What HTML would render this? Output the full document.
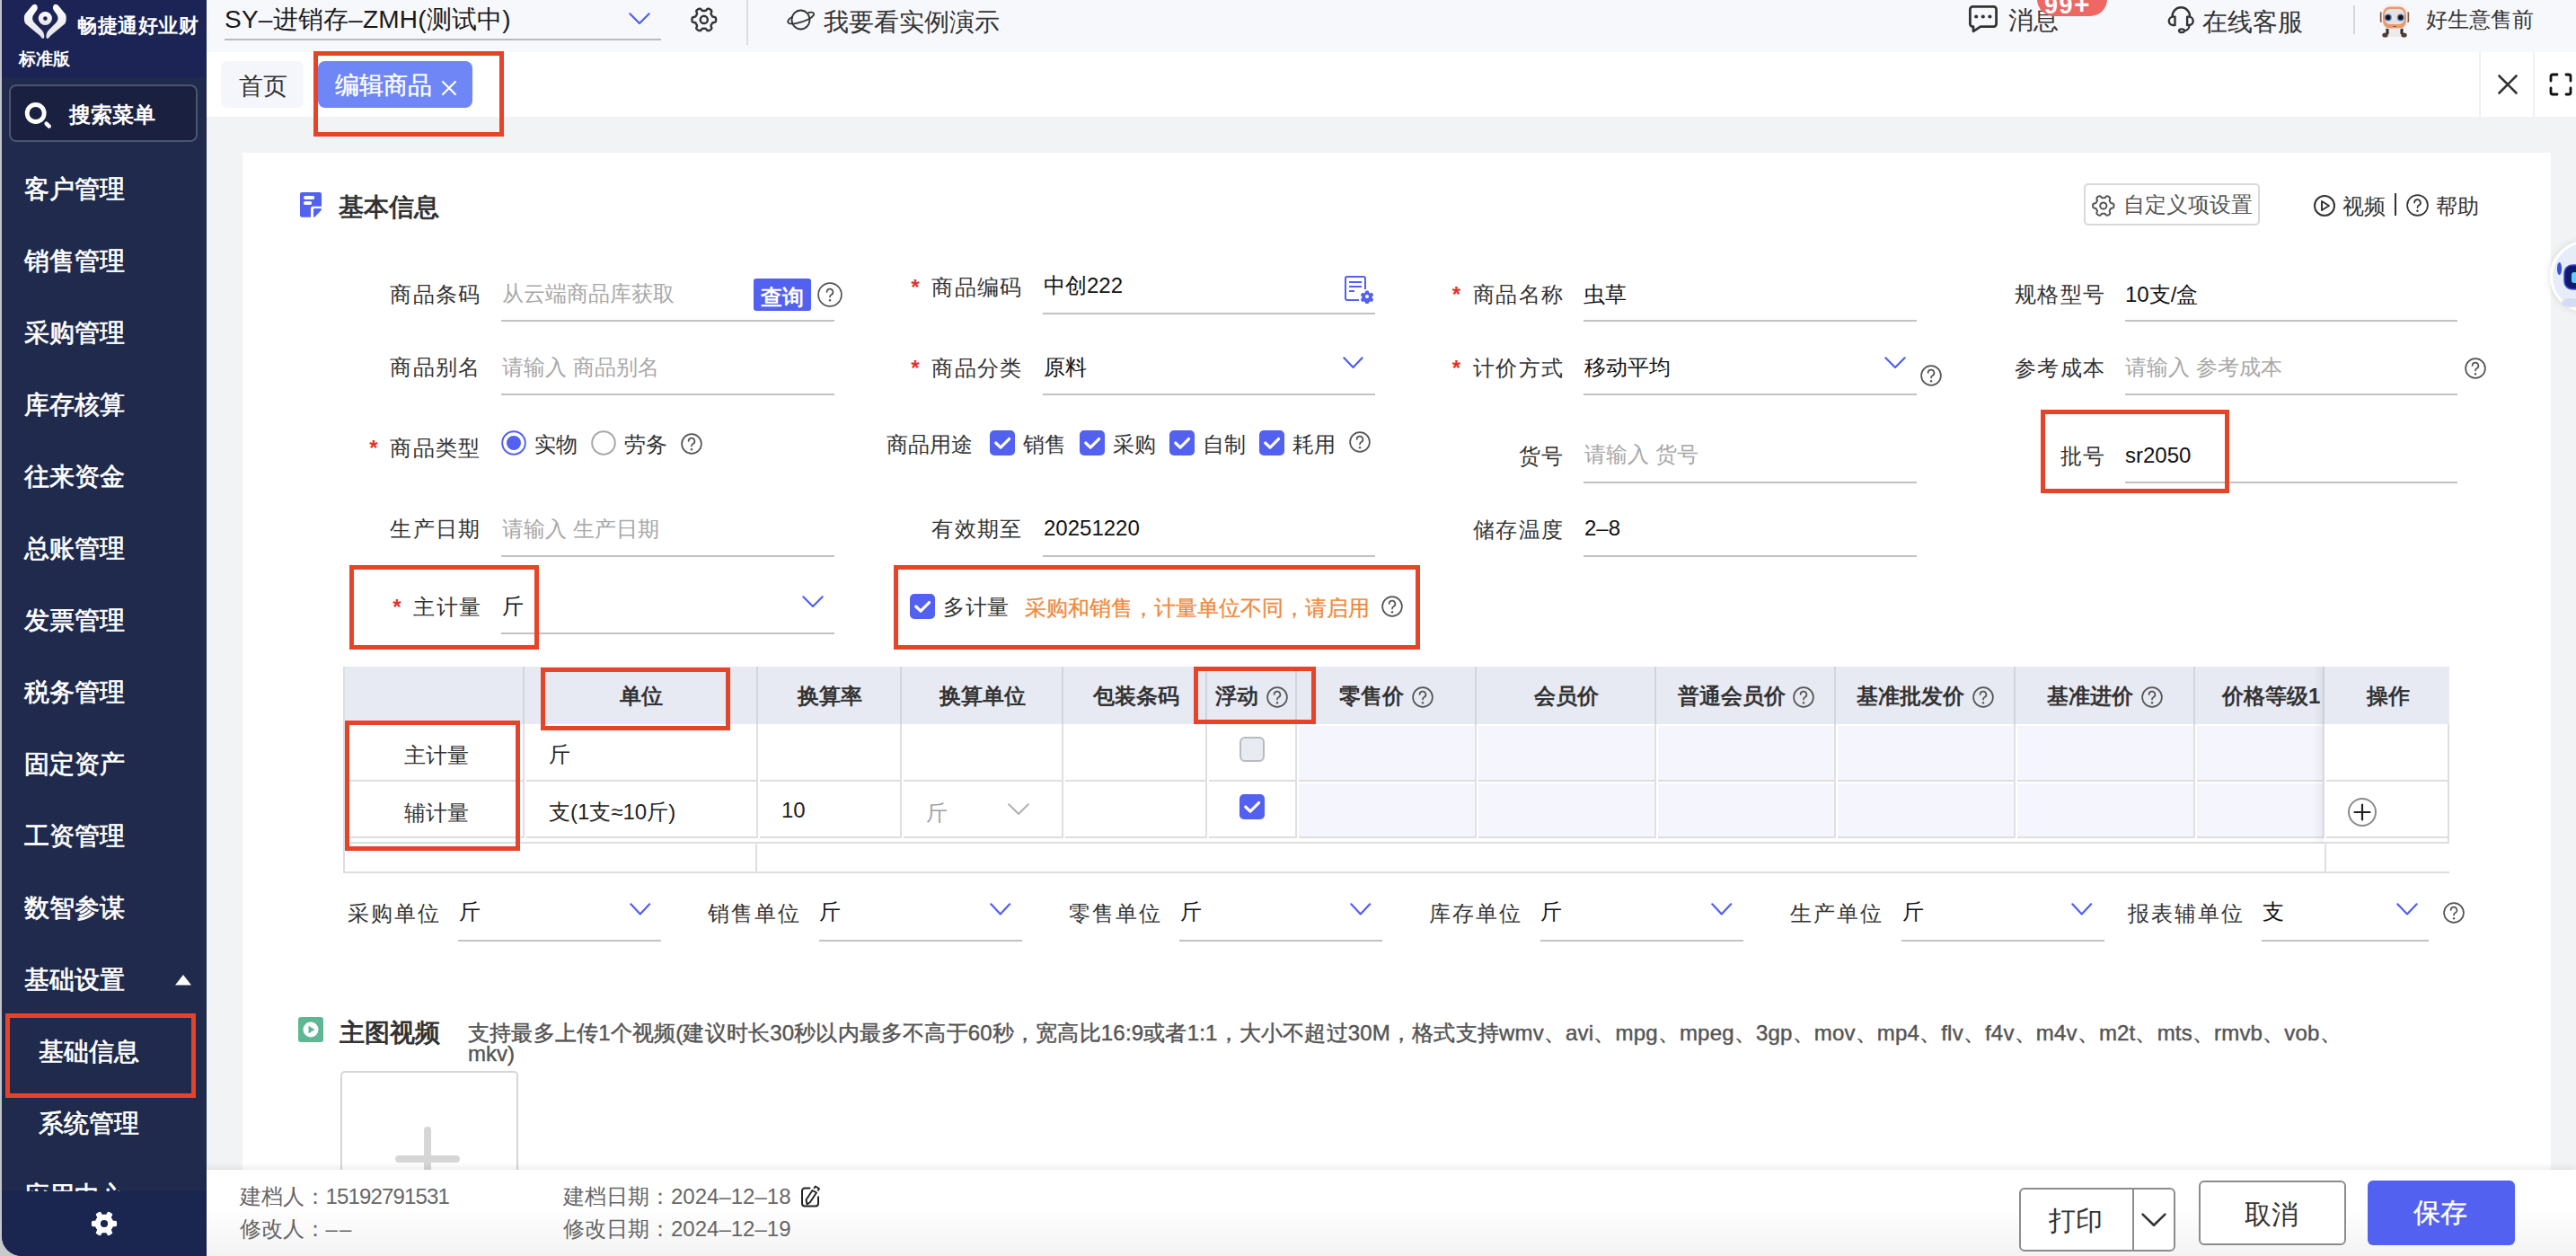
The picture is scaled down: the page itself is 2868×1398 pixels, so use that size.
<!DOCTYPE html><html><head><meta charset="utf-8"><style>
html,body{margin:0;padding:0;}
body{width:2868px;height:1398px;position:relative;overflow:hidden;background:#f2f3f5;font-family:"Liberation Sans",sans-serif;}
.t{position:absolute;white-space:nowrap;}
.b{position:absolute;}
</style></head><body>
<div class="b" style="left:230px;top:0px;width:2638px;height:58px;background:#f7f8fc;"></div>
<div class="b" style="left:230px;top:58px;width:2638px;height:72px;background:#ffffff;"></div>
<div class="b" style="left:270px;top:170px;width:2570px;height:1140px;background:#ffffff;"></div>
<div class="b" style="left:0px;top:0px;width:2px;height:1398px;background:#c3c4c8;"></div>
<div class="b" style="left:0px;top:1360px;width:40px;height:38px;background:#c8c9cd;"></div>
<div class="b" style="left:2px;top:0;width:228px;height:1398px;background:#1f2a4c;border-bottom-left-radius:22px;overflow:hidden;"><div class="b" style="left:0;top:0;width:228px;height:86px;background:#1b2454;"></div><div class="b" style="left:0;top:1326px;width:228px;height:72px;background:#1a2550;"></div></div>
<svg class="b" style="left:0px;top:0px;" width="100" height="50" viewBox="0 0 100 50">
<defs><linearGradient id="lg" x1="0" y1="0" x2="0" y2="1"><stop offset="0" stop-color="#ffffff"/><stop offset="1" stop-color="#e2e3e8"/></linearGradient></defs>
<path fill="url(#lg)" d="M38.7,4.8 C37.5,4.8 36.5,5.6 35.5,6.6 L28,15.5 C26.5,17.5 26.5,24 28.5,26.5 L44.5,39.8 C45.5,41 46.5,43 47.8,43 C49,43 49.5,41.5 49.2,39.5 C48.9,37 48,35 46,33 L38.5,25.5 C35.5,22.5 35.5,18.5 38,15.5 L40.8,11.5 C41.8,10 42,8.5 41.5,7 C41,5.6 39.9,4.8 38.7,4.8 Z"/>
<path fill="url(#lg)" d="M62,4.8 C63.2,4.8 64.2,5.6 65.2,6.6 L72.7,15.5 C74.2,17.5 74.2,24 72.2,26.5 L56.2,39.8 C55.2,41 54.2,43 52.9,43 C51.7,43 51.2,41.5 51.5,39.5 C51.8,37 52.7,35 54.7,33 L62.2,25.5 C65.2,22.5 65.2,18.5 62.7,15.5 L59.9,11.5 C58.9,10 58.7,8.5 59.2,7 C59.7,5.6 60.8,4.8 62,4.8 Z"/>
<ellipse cx="50.35" cy="20.5" rx="7.6" ry="7.4" fill="url(#lg)"/>
<circle cx="50.4" cy="20.6" r="2.3" fill="#1b2454"/>
</svg>
<div class="t " style="left:86px;top:18px;font-size:22px;line-height:22px;color:#fff;font-weight:bold;letter-spacing:0.6px;">畅捷通好业财</div>
<div class="t " style="left:21px;top:56px;font-size:19px;line-height:19px;color:#fff;font-weight:bold;">标准版</div>
<div class="b" style="left:10px;top:94px;width:210px;height:64px;box-sizing:border-box;border:2px solid #4b5470;border-radius:8px;background:#1a2140;"></div>
<svg class="b" style="left:27px;top:113px;" width="32" height="32" viewBox="0 0 32 32"><circle cx="12.7" cy="13" r="9.5" fill="none" stroke="#fff" stroke-width="4.8"/><line x1="24.6" y1="24.6" x2="27.8" y2="27.6" stroke="#fff" stroke-width="4.4" stroke-linecap="round"/></svg>
<div class="t " style="left:77px;top:116px;font-size:24px;line-height:24px;color:#fff;font-weight:bold;">搜索菜单</div>
<div class="t " style="left:27px;top:197px;font-size:28px;line-height:28px;color:#fff;-webkit-text-stroke:0.7px #fff;">客户管理</div>
<div class="t " style="left:27px;top:277px;font-size:28px;line-height:28px;color:#fff;-webkit-text-stroke:0.7px #fff;">销售管理</div>
<div class="t " style="left:27px;top:357px;font-size:28px;line-height:28px;color:#fff;-webkit-text-stroke:0.7px #fff;">采购管理</div>
<div class="t " style="left:27px;top:437px;font-size:28px;line-height:28px;color:#fff;-webkit-text-stroke:0.7px #fff;">库存核算</div>
<div class="t " style="left:27px;top:517px;font-size:28px;line-height:28px;color:#fff;-webkit-text-stroke:0.7px #fff;">往来资金</div>
<div class="t " style="left:27px;top:597px;font-size:28px;line-height:28px;color:#fff;-webkit-text-stroke:0.7px #fff;">总账管理</div>
<div class="t " style="left:27px;top:677px;font-size:28px;line-height:28px;color:#fff;-webkit-text-stroke:0.7px #fff;">发票管理</div>
<div class="t " style="left:27px;top:757px;font-size:28px;line-height:28px;color:#fff;-webkit-text-stroke:0.7px #fff;">税务管理</div>
<div class="t " style="left:27px;top:837px;font-size:28px;line-height:28px;color:#fff;-webkit-text-stroke:0.7px #fff;">固定资产</div>
<div class="t " style="left:27px;top:917px;font-size:28px;line-height:28px;color:#fff;-webkit-text-stroke:0.7px #fff;">工资管理</div>
<div class="t " style="left:27px;top:997px;font-size:28px;line-height:28px;color:#fff;-webkit-text-stroke:0.7px #fff;">数智参谋</div>
<div class="t " style="left:27px;top:1077px;font-size:28px;line-height:28px;color:#fff;-webkit-text-stroke:0.7px #fff;">基础设置</div>
<svg class="b" style="left:195px;top:1085px;" width="18" height="12" viewBox="0 0 18 12"><polygon points="9,0 18,11.5 0,11.5" fill="#fff"/></svg>
<div class="t " style="left:43px;top:1157px;font-size:28px;line-height:28px;color:#fff;-webkit-text-stroke:0.7px #fff;">基础信息</div>
<div class="t " style="left:43px;top:1237px;font-size:28px;line-height:28px;color:#fff;-webkit-text-stroke:0.7px #fff;">系统管理</div>
<div class="b" style="left:2px;top:1300px;width:228px;height:26px;overflow:hidden;"><div class="t" style="left:25px;top:17px;font-size:28px;line-height:28px;color:#fff;-webkit-text-stroke:0.7px #fff;">应用中心</div></div>
<div class="b" style="left:6px;top:1128px;width:212px;height:94px;box-sizing:border-box;border:5px solid #e64328;border-radius:0px;background:transparent;"></div>
<svg class="b" style="left:98px;top:1344px;" width="36" height="36" viewBox="0 0 36 36"><path fill="#fff" d="M32.10,18.00 L32.09,18.49 L32.06,18.98 L32.02,19.47 L31.95,19.96 L31.82,20.44 L31.50,20.87 L30.57,21.13 L29.00,21.16 L28.08,21.27 L27.74,21.55 L27.57,21.86 L27.41,22.19 L27.26,22.52 L27.09,22.84 L26.92,23.15 L26.74,23.46 L26.54,23.76 L26.34,24.06 L26.13,24.35 L25.94,24.66 L25.87,25.09 L26.24,25.95 L27.00,27.32 L27.24,28.26 L27.02,28.75 L26.67,29.10 L26.29,29.40 L25.88,29.69 L25.47,29.96 L25.05,30.21 L24.62,30.45 L24.18,30.67 L23.73,30.88 L23.28,31.06 L22.80,31.19 L22.27,31.13 L21.57,30.45 L20.77,29.11 L20.20,28.36 L19.80,28.21 L19.44,28.22 L19.08,28.25 L18.72,28.28 L18.36,28.29 L18.00,28.30 L17.64,28.29 L17.28,28.28 L16.92,28.25 L16.56,28.22 L16.20,28.21 L15.80,28.36 L15.23,29.11 L14.43,30.45 L13.73,31.13 L13.20,31.19 L12.72,31.06 L12.27,30.88 L11.82,30.67 L11.38,30.45 L10.95,30.21 L10.53,29.96 L10.12,29.69 L9.71,29.40 L9.33,29.10 L8.98,28.75 L8.76,28.26 L9.00,27.32 L9.76,25.95 L10.13,25.09 L10.06,24.66 L9.87,24.35 L9.66,24.06 L9.46,23.76 L9.26,23.46 L9.08,23.15 L8.91,22.84 L8.74,22.52 L8.59,22.19 L8.43,21.86 L8.26,21.55 L7.92,21.27 L7.00,21.16 L5.43,21.13 L4.50,20.87 L4.18,20.44 L4.05,19.96 L3.98,19.47 L3.94,18.98 L3.91,18.49 L3.90,18.00 L3.91,17.51 L3.94,17.02 L3.98,16.53 L4.05,16.04 L4.18,15.56 L4.50,15.13 L5.43,14.87 L7.00,14.84 L7.92,14.73 L8.26,14.45 L8.43,14.14 L8.59,13.81 L8.74,13.48 L8.91,13.16 L9.08,12.85 L9.26,12.54 L9.46,12.24 L9.66,11.94 L9.87,11.65 L10.06,11.34 L10.13,10.91 L9.76,10.05 L9.00,8.68 L8.76,7.74 L8.98,7.25 L9.33,6.90 L9.71,6.60 L10.12,6.31 L10.53,6.04 L10.95,5.79 L11.38,5.55 L11.82,5.33 L12.27,5.12 L12.72,4.94 L13.20,4.81 L13.73,4.87 L14.43,5.55 L15.23,6.89 L15.80,7.64 L16.20,7.79 L16.56,7.78 L16.92,7.75 L17.28,7.72 L17.64,7.71 L18.00,7.70 L18.36,7.71 L18.72,7.72 L19.08,7.75 L19.44,7.78 L19.80,7.79 L20.20,7.64 L20.77,6.89 L21.57,5.55 L22.27,4.87 L22.80,4.81 L23.28,4.94 L23.73,5.12 L24.18,5.33 L24.62,5.55 L25.05,5.79 L25.47,6.04 L25.88,6.31 L26.29,6.60 L26.67,6.90 L27.02,7.25 L27.24,7.74 L27.00,8.68 L26.24,10.05 L25.87,10.91 L25.94,11.34 L26.13,11.65 L26.34,11.94 L26.54,12.24 L26.74,12.54 L26.92,12.85 L27.09,13.16 L27.26,13.48 L27.41,13.81 L27.57,14.14 L27.74,14.45 L28.08,14.73 L29.00,14.84 L30.57,14.87 L31.50,15.13 L31.82,15.56 L31.95,16.04 L32.02,16.53 L32.06,17.02 L32.09,17.51Z"/><circle cx="18" cy="18" r="4.1" fill="#1a2550"/></svg>
<div class="t " style="left:250px;top:8px;font-size:28px;line-height:28px;color:#1a1a1a;letter-spacing:0.2px;">SY–进销存–ZMH(测试中)</div>
<div class="b" style="left:250px;top:43px;width:486px;height:2px;background:#b9bbbf;"></div>
<svg class="b" style="left:698px;top:12px;" width="28" height="17" viewBox="0 0 28 17"><polyline points="3.3200000000000003,3.3200000000000003 14.0,13.943999999999999 24.68,3.3200000000000003" fill="none" stroke="#4e5ef5" stroke-width="2.2" stroke-linecap="round" stroke-linejoin="round"/></svg>
<svg class="b" style="left:766px;top:5px;" width="36" height="34" viewBox="0 0 36 34"><path fill="none" stroke="#333" stroke-width="2.4" stroke-linejoin="round" d="M31.10,16.90 L31.09,17.36 L31.06,17.83 L30.99,18.29 L30.88,18.74 L30.66,19.17 L30.24,19.54 L29.48,19.81 L28.53,19.98 L27.77,20.14 L27.33,20.37 L27.07,20.64 L26.88,20.94 L26.71,21.25 L26.54,21.55 L26.37,21.85 L26.20,22.15 L26.02,22.44 L25.84,22.74 L25.68,23.05 L25.57,23.42 L25.59,23.91 L25.83,24.65 L26.16,25.56 L26.31,26.35 L26.20,26.91 L25.93,27.31 L25.60,27.63 L25.23,27.92 L24.85,28.18 L24.45,28.42 L24.04,28.64 L23.62,28.84 L23.19,29.02 L22.75,29.14 L22.27,29.17 L21.73,28.99 L21.12,28.47 L20.50,27.73 L19.98,27.15 L19.56,26.88 L19.19,26.80 L18.84,26.78 L18.49,26.79 L18.15,26.80 L17.80,26.80 L17.45,26.80 L17.11,26.79 L16.76,26.78 L16.41,26.80 L16.04,26.88 L15.62,27.15 L15.10,27.73 L14.48,28.47 L13.87,28.99 L13.33,29.17 L12.85,29.14 L12.41,29.02 L11.98,28.84 L11.56,28.64 L11.15,28.42 L10.75,28.18 L10.37,27.92 L10.00,27.63 L9.67,27.31 L9.40,26.91 L9.29,26.35 L9.44,25.56 L9.77,24.65 L10.01,23.91 L10.03,23.42 L9.92,23.05 L9.76,22.74 L9.58,22.44 L9.40,22.15 L9.23,21.85 L9.06,21.55 L8.89,21.25 L8.72,20.94 L8.53,20.64 L8.27,20.37 L7.83,20.14 L7.07,19.98 L6.12,19.81 L5.36,19.54 L4.94,19.17 L4.72,18.74 L4.61,18.29 L4.54,17.83 L4.51,17.36 L4.50,16.90 L4.51,16.44 L4.54,15.97 L4.61,15.51 L4.72,15.06 L4.94,14.63 L5.36,14.26 L6.12,13.99 L7.07,13.82 L7.83,13.66 L8.27,13.43 L8.53,13.16 L8.72,12.86 L8.89,12.55 L9.06,12.25 L9.23,11.95 L9.40,11.65 L9.58,11.36 L9.76,11.06 L9.92,10.75 L10.03,10.38 L10.01,9.89 L9.77,9.15 L9.44,8.24 L9.29,7.45 L9.40,6.89 L9.67,6.49 L10.00,6.17 L10.37,5.88 L10.75,5.62 L11.15,5.38 L11.56,5.16 L11.98,4.96 L12.41,4.78 L12.85,4.66 L13.33,4.63 L13.87,4.81 L14.48,5.33 L15.10,6.07 L15.62,6.65 L16.04,6.92 L16.41,7.00 L16.76,7.02 L17.11,7.01 L17.45,7.00 L17.80,7.00 L18.15,7.00 L18.49,7.01 L18.84,7.02 L19.19,7.00 L19.56,6.92 L19.98,6.65 L20.50,6.07 L21.12,5.33 L21.73,4.81 L22.27,4.63 L22.75,4.66 L23.19,4.78 L23.62,4.96 L24.04,5.16 L24.45,5.38 L24.85,5.62 L25.23,5.88 L25.60,6.17 L25.93,6.49 L26.20,6.89 L26.31,7.45 L26.16,8.24 L25.83,9.15 L25.59,9.89 L25.57,10.38 L25.68,10.75 L25.84,11.06 L26.02,11.36 L26.20,11.65 L26.37,11.95 L26.54,12.25 L26.71,12.55 L26.88,12.86 L27.07,13.16 L27.33,13.43 L27.77,13.66 L28.53,13.82 L29.48,13.99 L30.24,14.26 L30.66,14.63 L30.88,15.06 L30.99,15.51 L31.06,15.97 L31.09,16.44Z"/><circle cx="17.8" cy="16.9" r="4.1" fill="none" stroke="#333" stroke-width="2.4"/></svg>
<div class="b" style="left:831px;top:0px;width:2px;height:50px;background:#dcdde2;"></div>
<svg class="b" style="left:876px;top:10px;" width="32" height="24" viewBox="0 0 32 24"><ellipse cx="15.5" cy="12" rx="10" ry="10.5" fill="none" stroke="#333" stroke-width="1.8"/><path d="M6.5,8.5 C1,11 0,15 2.5,16 C6,17.5 17,15 24,11.5 C30,8.5 31.5,5 29,4 C27.5,3.4 25.5,3.6 23.5,4.2" fill="none" stroke="#333" stroke-width="1.8"/></svg>
<div class="t " style="left:917px;top:11px;font-size:28px;line-height:28px;color:#333;">我要看实例演示</div>
<svg class="b" style="left:2190px;top:4px;" width="36" height="36" viewBox="0 0 36 36"><path d="M6.4,3.4 h23.2 a3,3 0 0 1 3,3 v16.2 a3,3 0 0 1 -3,3 h-14.6 l-8,5.2 v-5.2 h-0.6 a3,3 0 0 1 -3,-3 v-16.2 a3,3 0 0 1 3,-3z" fill="none" stroke="#333" stroke-width="2.8" stroke-linejoin="round"/><circle cx="10.2" cy="14.5" r="2.1" fill="#333"/><circle cx="17.8" cy="14.5" r="2.1" fill="#333"/><circle cx="25.4" cy="14.5" r="2.1" fill="#333"/></svg>
<div class="t " style="left:2236px;top:9px;font-size:28px;line-height:28px;color:#333;">消息</div>
<div class="b" style="left:2268px;top:-20px;width:78px;height:38px;background:#ee6763;border-radius:0 0 19px 19px;"></div>
<div class="t" style="left:2276px;top:-9px;font-size:27px;line-height:27px;color:#fff;font-weight:bold;letter-spacing:1.5px;">99<span style="font-size:30px;">+</span></div>
<svg class="b" style="left:2405px;top:0px;" width="45" height="45" viewBox="0 0 45 45"><path d="M13.6,18.6 V18 A9.7,9.7 0 0 1 33,18 V18.6" fill="none" stroke="#333" stroke-width="2.4"/><path d="M16.5,18.6 V28 H14.5 A4.7,4.7 0 0 1 14.5,18.6 Z" fill="none" stroke="#333" stroke-width="2.4" stroke-linejoin="round"/><path d="M30.1,18.6 V28 H32 A4.7,4.7 0 0 0 32,18.6 Z" fill="none" stroke="#333" stroke-width="2.4" stroke-linejoin="round"/><path d="M32.5,28.5 C32.5,31.5 30,34 26.8,34.2" fill="none" stroke="#333" stroke-width="2.2"/><ellipse cx="24" cy="34.2" rx="3" ry="1.9" fill="none" stroke="#333" stroke-width="2.2"/></svg>
<div class="t " style="left:2452px;top:11px;font-size:28px;line-height:28px;color:#333;">在线客服</div>
<div class="b" style="left:2620px;top:6px;width:2px;height:32px;background:#d6d7dc;"></div>
<svg class="b" style="left:2645px;top:2px;" width="42" height="42" viewBox="0 0 42 42">
<rect x="4.8" y="11" width="3.4" height="12" rx="1.5" fill="#8a5a48"/><rect x="33.8" y="11" width="3.4" height="12" rx="1.5" fill="#8a5a48"/>
<rect x="13" y="29" width="16" height="10" rx="2" fill="#ecebea"/>
<rect x="11.5" y="29" width="3" height="7" fill="#2a2a32"/><rect x="27.5" y="29" width="3" height="7" fill="#2a2a32"/>
<ellipse cx="10.5" cy="37" rx="3.2" ry="2.6" fill="#5a3a30"/><ellipse cx="31.5" cy="37" rx="3.2" ry="2.6" fill="#5a3a30"/>
<rect x="6.5" y="2.5" width="29" height="28" rx="9" fill="#f5f2f0"/>
<rect x="8" y="5.5" width="26" height="24" rx="8" fill="#e9996e"/>
<rect x="10" y="8" width="22" height="17" rx="6" fill="#e6e0de"/>
<circle cx="13.8" cy="17.4" r="4" fill="#4a86cf"/><circle cx="13.8" cy="17.4" r="2.6" fill="#1a1010"/>
<circle cx="27.8" cy="17.4" r="4" fill="#4a86cf"/><circle cx="27.8" cy="17.4" r="2.6" fill="#1a1010"/>
<path d="M18.5,27 Q21,29 23.5,27 Z" fill="#7a4a3a"/>
</svg>
<div class="t " style="left:2701px;top:10px;font-size:24px;line-height:24px;color:#333;">好生意售前</div>
<div class="b" style="left:246px;top:68px;width:92px;height:52px;background:#f4f6fc;border-radius:7px;"></div>
<div class="t " style="left:266px;top:83px;font-size:27px;line-height:27px;color:#333;">首页</div>
<div class="b" style="left:354px;top:68px;width:172px;height:52px;background:#6e86f6;border-radius:8px;"></div>
<div class="t " style="left:373px;top:82px;font-size:27px;line-height:27px;color:#fff;-webkit-text-stroke:0.4px #fff;">编辑商品</div>
<svg class="b" style="left:490px;top:88px;" width="20" height="20" viewBox="0 0 20 20"><path d="M3,3 L17,17 M17,3 L3,17" stroke="#fff" stroke-width="2.2" stroke-linecap="round"/></svg>
<div class="b" style="left:349px;top:57px;width:212px;height:95px;box-sizing:border-box;border:5px solid #e64328;border-radius:0px;background:transparent;"></div>
<div class="b" style="left:2760px;top:58px;width:2px;height:72px;background:#eef0f7;"></div>
<div class="b" style="left:2820px;top:58px;width:2px;height:72px;background:#eef0f7;"></div>
<svg class="b" style="left:2780px;top:82px;" width="24" height="24" viewBox="0 0 24 24"><path d="M2.5,2.5 L21.5,21.5 M21.5,2.5 L2.5,21.5" stroke="#333" stroke-width="2.6" stroke-linecap="round"/></svg>
<svg class="b" style="left:2838px;top:81px;" width="30" height="26" viewBox="0 0 30 26"><path d="M2,9 V4 a2,2 0 0 1 2,-2 H9 M19,2 H22 a2,2 0 0 1 2,2 V9 M24,17 V22 a2,2 0 0 1 -2,2 H19 M9,24 H4 a2,2 0 0 1 -2,-2 V17" fill="none" stroke="#111" stroke-width="2.8" stroke-linecap="round"/></svg>
<svg class="b" style="left:334px;top:214px;" width="24" height="28" viewBox="0 0 24 28"><path fill="#5361f0" d="M2,0 H22 a2,2 0 0 1 2,2 V15.8 H14.5 a2.5,2.5 0 0 0 -2.5,2.5 V27.7 H2 a2,2 0 0 1 -2,-2 V2 a2,2 0 0 1 2,-2 Z"/><path fill="#5361f0" d="M16.2,18.1 H22.8 a1.2,1.2 0 0 1 0.9,2 L16.5,27.6 a1,1 0 0 1 -1.5,-0.6 V19.3 a1.2,1.2 0 0 1 1.2,-1.2 Z"/><rect x="4" y="3.9" width="12.2" height="4.2" rx="2.1" fill="#fff"/><rect x="4" y="10" width="9.2" height="4" rx="2" fill="#fff"/></svg>
<div class="t " style="left:377px;top:217px;font-size:28px;line-height:28px;color:#333;font-weight:bold;">基本信息</div>
<div class="b" style="left:2320px;top:204px;width:196px;height:47px;box-sizing:border-box;border:2px solid #d9d9dc;border-radius:5px;background:transparent;"></div>
<svg class="b" style="left:2326px;top:214px;" width="32" height="30" viewBox="0 0 32 30"><path fill="none" stroke="#555" stroke-width="2" stroke-linejoin="round" d="M27.50,15.00 L27.49,15.41 L27.46,15.82 L27.40,16.22 L27.30,16.62 L27.12,17.00 L26.74,17.33 L26.07,17.56 L25.23,17.70 L24.56,17.85 L24.17,18.05 L23.94,18.29 L23.78,18.55 L23.63,18.82 L23.48,19.09 L23.33,19.35 L23.18,19.61 L23.02,19.87 L22.86,20.13 L22.72,20.41 L22.63,20.73 L22.65,21.17 L22.86,21.82 L23.16,22.62 L23.28,23.31 L23.19,23.80 L22.95,24.15 L22.66,24.44 L22.34,24.69 L22.00,24.92 L21.65,25.13 L21.29,25.33 L20.92,25.51 L20.55,25.66 L20.15,25.77 L19.73,25.80 L19.26,25.64 L18.72,25.18 L18.17,24.52 L17.72,24.01 L17.35,23.77 L17.02,23.70 L16.71,23.68 L16.41,23.69 L16.10,23.70 L15.80,23.70 L15.50,23.70 L15.19,23.69 L14.89,23.68 L14.58,23.70 L14.25,23.77 L13.88,24.01 L13.43,24.52 L12.88,25.18 L12.34,25.64 L11.87,25.80 L11.45,25.77 L11.05,25.66 L10.68,25.51 L10.31,25.33 L9.95,25.13 L9.60,24.92 L9.26,24.69 L8.94,24.44 L8.65,24.15 L8.41,23.80 L8.32,23.31 L8.44,22.62 L8.74,21.82 L8.95,21.17 L8.97,20.73 L8.88,20.41 L8.74,20.13 L8.58,19.87 L8.42,19.61 L8.27,19.35 L8.12,19.09 L7.97,18.82 L7.82,18.55 L7.66,18.29 L7.43,18.05 L7.04,17.85 L6.37,17.70 L5.53,17.56 L4.86,17.33 L4.48,17.00 L4.30,16.62 L4.20,16.22 L4.14,15.82 L4.11,15.41 L4.10,15.00 L4.11,14.59 L4.14,14.18 L4.20,13.78 L4.30,13.38 L4.48,13.00 L4.86,12.67 L5.53,12.44 L6.37,12.30 L7.04,12.15 L7.43,11.95 L7.66,11.71 L7.82,11.45 L7.97,11.18 L8.12,10.91 L8.27,10.65 L8.42,10.39 L8.58,10.13 L8.74,9.87 L8.88,9.59 L8.97,9.27 L8.95,8.83 L8.74,8.18 L8.44,7.38 L8.32,6.69 L8.41,6.20 L8.65,5.85 L8.94,5.56 L9.26,5.31 L9.60,5.08 L9.95,4.87 L10.31,4.67 L10.68,4.49 L11.05,4.34 L11.45,4.23 L11.87,4.20 L12.34,4.36 L12.88,4.82 L13.43,5.48 L13.88,5.99 L14.25,6.23 L14.58,6.30 L14.89,6.32 L15.19,6.31 L15.50,6.30 L15.80,6.30 L16.10,6.30 L16.41,6.31 L16.71,6.32 L17.02,6.30 L17.35,6.23 L17.72,5.99 L18.17,5.48 L18.72,4.82 L19.26,4.36 L19.73,4.20 L20.15,4.23 L20.55,4.34 L20.92,4.49 L21.29,4.67 L21.65,4.87 L22.00,5.08 L22.34,5.31 L22.66,5.56 L22.95,5.85 L23.19,6.20 L23.28,6.69 L23.16,7.38 L22.86,8.18 L22.65,8.83 L22.63,9.27 L22.72,9.59 L22.86,9.87 L23.02,10.13 L23.18,10.39 L23.33,10.65 L23.48,10.91 L23.63,11.18 L23.78,11.45 L23.94,11.71 L24.17,11.95 L24.56,12.15 L25.23,12.30 L26.07,12.44 L26.74,12.67 L27.12,13.00 L27.30,13.38 L27.40,13.78 L27.46,14.18 L27.49,14.59Z"/><circle cx="15.8" cy="15" r="3.6" fill="none" stroke="#555" stroke-width="2"/></svg>
<div class="t " style="left:2363.5px;top:216px;font-size:24px;line-height:24px;color:#555;">自定义项设置</div>
<svg class="b" style="left:2575px;top:216px;" width="26" height="26" viewBox="0 0 26 26"><circle cx="13" cy="13" r="11" fill="none" stroke="#333" stroke-width="2"/><path d="M10,8 L18,13 L10,18 Z" fill="none" stroke="#333" stroke-width="2" stroke-linejoin="round"/></svg>
<div class="t " style="left:2608px;top:218px;font-size:24px;line-height:24px;color:#333;">视频</div>
<div class="b" style="left:2666px;top:215px;width:2px;height:25px;background:#333;"></div>
<svg class="b" style="left:2679px;top:216px;" width="25" height="25" viewBox="0 0 25 25"><circle cx="12.5" cy="12.5" r="11.4" fill="none" stroke="#333" stroke-width="1.7"/><path d="M9.1,9.5 a3.4,3.4 0 1 1 5.0,3.0 c-1.1,0.6 -1.6,1.2 -1.6,2.5" fill="none" stroke="#333" stroke-width="1.7" stroke-linecap="round"/><circle cx="12.5" cy="18.7" r="1.2" fill="#333"/></svg>
<div class="t " style="left:2712px;top:218px;font-size:24px;line-height:24px;color:#333;">帮助</div>
<div class="t " style="left:434.3px;top:316px;font-size:24px;line-height:24px;color:#333;letter-spacing:1.4px;">商品条码</div>
<div class="t " style="left:559px;top:315px;font-size:24px;line-height:24px;color:#a8a8a8;">从云端商品库获取</div>
<div class="b" style="left:839px;top:310px;width:64px;height:36px;background:#5361f0;border-radius:3px;"></div>
<div class="t " style="left:847px;top:319px;font-size:24px;line-height:24px;color:#fff;font-weight:bold;">查询</div>
<svg class="b" style="left:910px;top:314px;" width="28" height="28" viewBox="0 0 28 28"><circle cx="14.0" cy="14.0" r="12.9" fill="none" stroke="#555" stroke-width="1.7"/><path d="M10.6,11.0 a3.4,3.4 0 1 1 5.0,3.0 c-1.1,0.6 -1.6,1.2 -1.6,2.5" fill="none" stroke="#555" stroke-width="1.7" stroke-linecap="round"/><circle cx="14.0" cy="20.2" r="1.2" fill="#555"/></svg>
<div class="b" style="left:558px;top:356px;width:371px;height:2px;background:#c2c2c2;"></div>
<div class="t " style="left:1037.3px;top:308px;font-size:24px;line-height:24px;color:#333;letter-spacing:1.4px;">商品编码</div>
<div class="t " style="left:1014.3px;top:307.5px;font-size:24px;line-height:24px;color:#e5302a;font-weight:bold;">*</div>
<div class="t " style="left:1162px;top:306px;font-size:24px;line-height:24px;color:#111;">中创222</div>
<svg class="b" style="left:1496px;top:306px;" width="36" height="32" viewBox="0 0 36 32"><path d="M17,28 H4 a2,2 0 0 1 -2,-2 V4 a2,2 0 0 1 2,-2 H22 a2,2 0 0 1 2,2 V16" fill="none" stroke="#5361f0" stroke-width="2"/><line x1="6" y1="8" x2="20" y2="8" stroke="#5361f0" stroke-width="2"/><line x1="6" y1="13" x2="20" y2="13" stroke="#5361f0" stroke-width="2"/><line x1="6" y1="18" x2="12" y2="18" stroke="#5361f0" stroke-width="2"/><g transform="translate(26,24)"><path fill="#5361f0" d="M-1.6,-6.5h3.2l0.5,2a4.5,4.5 0 0 1 1.5,0.9l2-0.6l1.6,2.8l-1.5,1.4a4.5,4.5 0 0 1 0,1.8l1.5,1.4l-1.6,2.8l-2-0.6a4.5,4.5 0 0 1 -1.5,0.9l-0.5,2h-3.2l-0.5-2a4.5,4.5 0 0 1 -1.5-0.9l-2,0.6l-1.6-2.8l1.5-1.4a4.5,4.5 0 0 1 0-1.8l-1.5-1.4l1.6-2.8l2,0.6a4.5,4.5 0 0 1 1.5-0.9z"/><circle r="2" fill="#fff"/></g></svg>
<div class="b" style="left:1161px;top:348px;width:370px;height:2px;background:#c2c2c2;"></div>
<div class="t " style="left:1639.8px;top:316px;font-size:24px;line-height:24px;color:#333;letter-spacing:1.4px;">商品名称</div>
<div class="t " style="left:1616.8px;top:315.5px;font-size:24px;line-height:24px;color:#e5302a;font-weight:bold;">*</div>
<div class="t " style="left:1763px;top:316px;font-size:24px;line-height:24px;color:#111;">虫草</div>
<div class="b" style="left:1763px;top:356px;width:371px;height:2px;background:#c2c2c2;"></div>
<div class="t " style="left:2242.8px;top:316px;font-size:24px;line-height:24px;color:#333;letter-spacing:1.4px;">规格型号</div>
<div class="t " style="left:2366px;top:316px;font-size:24px;line-height:24px;color:#111;">10支/盒</div>
<div class="b" style="left:2366px;top:356px;width:370px;height:2px;background:#c2c2c2;"></div>
<div class="t " style="left:434.3px;top:397px;font-size:24px;line-height:24px;color:#333;letter-spacing:1.4px;">商品别名</div>
<div class="t " style="left:559px;top:397px;font-size:24px;line-height:24px;color:#a8a8a8;">请输入 商品别名</div>
<div class="b" style="left:558px;top:438px;width:371px;height:2px;background:#c2c2c2;"></div>
<div class="t " style="left:1037.3px;top:398px;font-size:24px;line-height:24px;color:#333;letter-spacing:1.4px;">商品分类</div>
<div class="t " style="left:1014.3px;top:397.5px;font-size:24px;line-height:24px;color:#e5302a;font-weight:bold;">*</div>
<div class="t " style="left:1162px;top:397px;font-size:24px;line-height:24px;color:#111;">原料</div>
<svg class="b" style="left:1493px;top:395px;" width="27" height="17" viewBox="0 0 27 17"><polyline points="3.3200000000000003,3.3200000000000003 13.5,13.943999999999999 23.68,3.3200000000000003" fill="none" stroke="#4e5ef5" stroke-width="2.2" stroke-linecap="round" stroke-linejoin="round"/></svg>
<div class="b" style="left:1161px;top:438px;width:370px;height:2px;background:#c2c2c2;"></div>
<div class="t " style="left:1639.8px;top:398px;font-size:24px;line-height:24px;color:#333;letter-spacing:1.4px;">计价方式</div>
<div class="t " style="left:1616.8px;top:397.5px;font-size:24px;line-height:24px;color:#e5302a;font-weight:bold;">*</div>
<div class="t " style="left:1764px;top:397px;font-size:24px;line-height:24px;color:#111;">移动平均</div>
<svg class="b" style="left:2096px;top:395px;" width="28" height="17" viewBox="0 0 28 17"><polyline points="3.3200000000000003,3.3200000000000003 14.0,13.943999999999999 24.68,3.3200000000000003" fill="none" stroke="#4e5ef5" stroke-width="2.2" stroke-linecap="round" stroke-linejoin="round"/></svg>
<div class="b" style="left:1763px;top:438px;width:371px;height:2px;background:#c2c2c2;"></div>
<svg class="b" style="left:2138px;top:406px;" width="24" height="24" viewBox="0 0 24 24"><circle cx="12.0" cy="12.0" r="10.9" fill="none" stroke="#555" stroke-width="1.7"/><path d="M8.6,9.0 a3.4,3.4 0 1 1 5.0,3.0 c-1.1,0.6 -1.6,1.2 -1.6,2.5" fill="none" stroke="#555" stroke-width="1.7" stroke-linecap="round"/><circle cx="12.0" cy="18.2" r="1.2" fill="#555"/></svg>
<div class="t " style="left:2242.8px;top:398px;font-size:24px;line-height:24px;color:#333;letter-spacing:1.4px;">参考成本</div>
<div class="t " style="left:2366px;top:397px;font-size:24px;line-height:24px;color:#a8a8a8;">请输入 参考成本</div>
<svg class="b" style="left:2744px;top:398px;" width="24" height="24" viewBox="0 0 24 24"><circle cx="12.0" cy="12.0" r="10.9" fill="none" stroke="#555" stroke-width="1.7"/><path d="M8.6,9.0 a3.4,3.4 0 1 1 5.0,3.0 c-1.1,0.6 -1.6,1.2 -1.6,2.5" fill="none" stroke="#555" stroke-width="1.7" stroke-linecap="round"/><circle cx="12.0" cy="18.2" r="1.2" fill="#555"/></svg>
<div class="b" style="left:2366px;top:438px;width:370px;height:2px;background:#c2c2c2;"></div>
<div class="t " style="left:434.3px;top:487px;font-size:24px;line-height:24px;color:#333;letter-spacing:1.4px;">商品类型</div>
<div class="t " style="left:411.3px;top:486.5px;font-size:24px;line-height:24px;color:#e5302a;font-weight:bold;">*</div>
<svg class="b" style="left:557px;top:478px;" width="30" height="30" viewBox="0 0 30 30"><circle cx="15" cy="15" r="12.8" fill="#fff" stroke="#5361f0" stroke-width="2"/><circle cx="15" cy="15" r="8" fill="#5361f0"/></svg>
<div class="t " style="left:595px;top:483px;font-size:24px;line-height:24px;color:#333;">实物</div>
<svg class="b" style="left:657px;top:478px;" width="30" height="30" viewBox="0 0 30 30"><circle cx="15" cy="15" r="12.8" fill="#fff" stroke="#a8a8a8" stroke-width="2"/></svg>
<div class="t " style="left:695px;top:483px;font-size:24px;line-height:24px;color:#333;">劳务</div>
<svg class="b" style="left:758px;top:482px;" width="24" height="24" viewBox="0 0 24 24"><circle cx="12.0" cy="12.0" r="10.9" fill="none" stroke="#555" stroke-width="1.7"/><path d="M8.6,9.0 a3.4,3.4 0 1 1 5.0,3.0 c-1.1,0.6 -1.6,1.2 -1.6,2.5" fill="none" stroke="#555" stroke-width="1.7" stroke-linecap="round"/><circle cx="12.0" cy="18.2" r="1.2" fill="#555"/></svg>
<div class="t " style="left:987px;top:483px;font-size:24px;line-height:24px;color:#333;">商品用途</div>
<svg class="b" style="left:1102px;top:479px;" width="28" height="28" viewBox="0 0 28 28"><rect x="0" y="0" width="28" height="28" rx="5" fill="#5361f0"/><polyline points="6.72,14.0 12.04,19.040000000000003 21.560000000000002,9.520000000000001" fill="none" stroke="#fff" stroke-width="3.2" stroke-linecap="round" stroke-linejoin="round"/></svg>
<div class="t " style="left:1139px;top:483px;font-size:24px;line-height:24px;color:#333;">销售</div>
<svg class="b" style="left:1202px;top:479px;" width="28" height="28" viewBox="0 0 28 28"><rect x="0" y="0" width="28" height="28" rx="5" fill="#5361f0"/><polyline points="6.72,14.0 12.04,19.040000000000003 21.560000000000002,9.520000000000001" fill="none" stroke="#fff" stroke-width="3.2" stroke-linecap="round" stroke-linejoin="round"/></svg>
<div class="t " style="left:1239px;top:483px;font-size:24px;line-height:24px;color:#333;">采购</div>
<svg class="b" style="left:1302px;top:479px;" width="28" height="28" viewBox="0 0 28 28"><rect x="0" y="0" width="28" height="28" rx="5" fill="#5361f0"/><polyline points="6.72,14.0 12.04,19.040000000000003 21.560000000000002,9.520000000000001" fill="none" stroke="#fff" stroke-width="3.2" stroke-linecap="round" stroke-linejoin="round"/></svg>
<div class="t " style="left:1339px;top:483px;font-size:24px;line-height:24px;color:#333;">自制</div>
<svg class="b" style="left:1402px;top:479px;" width="28" height="28" viewBox="0 0 28 28"><rect x="0" y="0" width="28" height="28" rx="5" fill="#5361f0"/><polyline points="6.72,14.0 12.04,19.040000000000003 21.560000000000002,9.520000000000001" fill="none" stroke="#fff" stroke-width="3.2" stroke-linecap="round" stroke-linejoin="round"/></svg>
<div class="t " style="left:1439px;top:483px;font-size:24px;line-height:24px;color:#333;">耗用</div>
<svg class="b" style="left:1502px;top:480px;" width="24" height="24" viewBox="0 0 24 24"><circle cx="12.0" cy="12.0" r="10.9" fill="none" stroke="#555" stroke-width="1.7"/><path d="M8.6,9.0 a3.4,3.4 0 1 1 5.0,3.0 c-1.1,0.6 -1.6,1.2 -1.6,2.5" fill="none" stroke="#555" stroke-width="1.7" stroke-linecap="round"/><circle cx="12.0" cy="18.2" r="1.2" fill="#555"/></svg>
<div class="t " style="left:1690.6px;top:496px;font-size:24px;line-height:24px;color:#333;letter-spacing:1.4px;">货号</div>
<div class="t " style="left:1764px;top:494px;font-size:24px;line-height:24px;color:#a8a8a8;">请输入 货号</div>
<div class="b" style="left:1763px;top:536px;width:371px;height:2px;background:#c2c2c2;"></div>
<div class="t " style="left:2293.6px;top:496px;font-size:24px;line-height:24px;color:#333;letter-spacing:1.4px;">批号</div>
<div class="t " style="left:2366px;top:495px;font-size:24px;line-height:24px;color:#111;">sr2050</div>
<div class="b" style="left:2366px;top:536px;width:370px;height:2px;background:#c2c2c2;"></div>
<div class="b" style="left:2272px;top:456px;width:210px;height:93px;box-sizing:border-box;border:5px solid #e64328;border-radius:0px;background:transparent;"></div>
<div class="t " style="left:434.3px;top:577px;font-size:24px;line-height:24px;color:#333;letter-spacing:1.4px;">生产日期</div>
<div class="t " style="left:559px;top:577px;font-size:24px;line-height:24px;color:#a8a8a8;">请输入 生产日期</div>
<div class="b" style="left:558px;top:618px;width:371px;height:2px;background:#c2c2c2;"></div>
<div class="t " style="left:1037.3px;top:577px;font-size:24px;line-height:24px;color:#333;letter-spacing:1.4px;">有效期至</div>
<div class="t " style="left:1162px;top:576px;font-size:24px;line-height:24px;color:#111;">20251220</div>
<div class="b" style="left:1161px;top:618px;width:370px;height:2px;background:#c2c2c2;"></div>
<div class="t " style="left:1639.8px;top:577.5px;font-size:24px;line-height:24px;color:#333;letter-spacing:1.4px;">储存温度</div>
<div class="t " style="left:1764px;top:576px;font-size:24px;line-height:24px;color:#111;">2–8</div>
<div class="b" style="left:1763px;top:618px;width:371px;height:2px;background:#c2c2c2;"></div>
<div class="t " style="left:460.2px;top:664px;font-size:24px;line-height:24px;color:#333;letter-spacing:1.4px;">主计量</div>
<div class="t " style="left:437.2px;top:663.5px;font-size:24px;line-height:24px;color:#e5302a;font-weight:bold;">*</div>
<div class="t " style="left:559px;top:663px;font-size:24px;line-height:24px;color:#111;">斤</div>
<svg class="b" style="left:891px;top:661px;" width="28" height="17" viewBox="0 0 28 17"><polyline points="3.3200000000000003,3.3200000000000003 14.0,13.943999999999999 24.68,3.3200000000000003" fill="none" stroke="#4e5ef5" stroke-width="2.2" stroke-linecap="round" stroke-linejoin="round"/></svg>
<div class="b" style="left:558px;top:704px;width:371px;height:2px;background:#c2c2c2;"></div>
<div class="b" style="left:389px;top:629px;width:211px;height:94px;box-sizing:border-box;border:5px solid #e64328;border-radius:0px;background:transparent;"></div>
<svg class="b" style="left:1013px;top:661px;" width="28" height="28" viewBox="0 0 28 28"><rect x="0" y="0" width="28" height="28" rx="5" fill="#5361f0"/><polyline points="6.72,14.0 12.04,19.040000000000003 21.560000000000002,9.520000000000001" fill="none" stroke="#fff" stroke-width="3.2" stroke-linecap="round" stroke-linejoin="round"/></svg>
<div class="t " style="left:1050px;top:664px;font-size:24px;line-height:24px;color:#333;letter-spacing:0.5px;">多计量</div>
<div class="t " style="left:1141px;top:665px;font-size:24px;line-height:24px;color:#f08a3c;-webkit-text-stroke:0.3px #f08a3c;">采购和销售，计量单位不同，请启用</div>
<svg class="b" style="left:1538px;top:663px;" width="24" height="24" viewBox="0 0 24 24"><circle cx="12.0" cy="12.0" r="10.9" fill="none" stroke="#555" stroke-width="1.7"/><path d="M8.6,9.0 a3.4,3.4 0 1 1 5.0,3.0 c-1.1,0.6 -1.6,1.2 -1.6,2.5" fill="none" stroke="#555" stroke-width="1.7" stroke-linecap="round"/><circle cx="12.0" cy="18.2" r="1.2" fill="#555"/></svg>
<div class="b" style="left:995px;top:629px;width:586px;height:94px;box-sizing:border-box;border:5px solid #e64328;border-radius:0px;background:transparent;"></div>
<div class="b" style="left:382px;top:742px;width:2345px;height:64px;background:#e8eaf3;"></div>
<div class="b" style="left:382px;top:806px;width:1061px;height:127px;background:#ffffff;"></div>
<div class="b" style="left:1443px;top:806px;width:1144px;height:127px;background:#f5f6fd;"></div>
<div class="b" style="left:2587px;top:806px;width:140px;height:127px;background:#ffffff;"></div>
<div class="b" style="left:581.5px;top:742px;width:2px;height:64px;background:#d3d5dd;"></div>
<div class="b" style="left:841.5px;top:742px;width:2px;height:64px;background:#d3d5dd;"></div>
<div class="b" style="left:1002px;top:742px;width:2px;height:64px;background:#d3d5dd;"></div>
<div class="b" style="left:1182px;top:742px;width:2px;height:64px;background:#d3d5dd;"></div>
<div class="b" style="left:1342px;top:742px;width:2px;height:64px;background:#d3d5dd;"></div>
<div class="b" style="left:1442px;top:742px;width:2px;height:64px;background:#d3d5dd;"></div>
<div class="b" style="left:1641.5px;top:742px;width:2px;height:64px;background:#d3d5dd;"></div>
<div class="b" style="left:1842px;top:742px;width:2px;height:64px;background:#d3d5dd;"></div>
<div class="b" style="left:2042px;top:742px;width:2px;height:64px;background:#d3d5dd;"></div>
<div class="b" style="left:2242px;top:742px;width:2px;height:64px;background:#d3d5dd;"></div>
<div class="b" style="left:2442px;top:742px;width:2px;height:64px;background:#d3d5dd;"></div>
<div class="b" style="left:2586px;top:742px;width:2px;height:64px;background:#d3d5dd;"></div>
<div class="b" style="left:581.5px;top:806px;width:2px;height:127px;background:#e0e0e3;"></div>
<div class="b" style="left:841.5px;top:806px;width:2px;height:127px;background:#e0e0e3;"></div>
<div class="b" style="left:1002px;top:806px;width:2px;height:127px;background:#e0e0e3;"></div>
<div class="b" style="left:1182px;top:806px;width:2px;height:127px;background:#e0e0e3;"></div>
<div class="b" style="left:1342px;top:806px;width:2px;height:127px;background:#e0e0e3;"></div>
<div class="b" style="left:1442px;top:806px;width:2px;height:127px;background:#e0e0e3;"></div>
<div class="b" style="left:1641.5px;top:806px;width:2px;height:127px;background:#e0e0e3;"></div>
<div class="b" style="left:1842px;top:806px;width:2px;height:127px;background:#e0e0e3;"></div>
<div class="b" style="left:2042px;top:806px;width:2px;height:127px;background:#e0e0e3;"></div>
<div class="b" style="left:2242px;top:806px;width:2px;height:127px;background:#e0e0e3;"></div>
<div class="b" style="left:2442px;top:806px;width:2px;height:127px;background:#e0e0e3;"></div>
<div class="b" style="left:2586px;top:806px;width:2px;height:127px;background:#e0e0e3;"></div>
<div class="b" style="left:382px;top:868px;width:2345px;height:2px;background:#dedee1;"></div>
<div class="b" style="left:382px;top:931px;width:2345px;height:2px;background:#dedee1;"></div>
<div class="b" style="left:382px;top:937px;width:2345px;height:2px;background:#dedee1;"></div>
<div class="b" style="left:382px;top:970px;width:2345px;height:2px;background:#dedee1;"></div>
<div class="b" style="left:382px;top:742px;width:2px;height:230px;background:#dedee1;"></div>
<div class="b" style="left:2725px;top:806px;width:2px;height:131px;background:#dedee1;"></div>
<div class="b" style="left:841px;top:938px;width:2px;height:33px;background:#e0e0e3;"></div>
<div class="b" style="left:2588px;top:938px;width:2px;height:33px;background:#e0e0e3;"></div>
<div class="b" style="left:384px;top:806px;width:2341px;height:2px;background:#ffffff;"></div>
<div class="b" style="left:384px;top:870px;width:2341px;height:2px;background:#ffffff;"></div>
<div class="b" style="left:583.5px;top:806px;width:2px;height:127px;background:#ffffff;"></div>
<div class="b" style="left:843.5px;top:806px;width:2px;height:127px;background:#ffffff;"></div>
<div class="b" style="left:1004px;top:806px;width:2px;height:127px;background:#ffffff;"></div>
<div class="b" style="left:1184px;top:806px;width:2px;height:127px;background:#ffffff;"></div>
<div class="b" style="left:1344px;top:806px;width:2px;height:127px;background:#ffffff;"></div>
<div class="b" style="left:1444px;top:806px;width:2px;height:127px;background:#ffffff;"></div>
<div class="b" style="left:1643.5px;top:806px;width:2px;height:127px;background:#ffffff;"></div>
<div class="b" style="left:1844px;top:806px;width:2px;height:127px;background:#ffffff;"></div>
<div class="b" style="left:2044px;top:806px;width:2px;height:127px;background:#ffffff;"></div>
<div class="b" style="left:2244px;top:806px;width:2px;height:127px;background:#ffffff;"></div>
<div class="b" style="left:2444px;top:806px;width:2px;height:127px;background:#ffffff;"></div>
<div class="b" style="left:2588px;top:806px;width:2px;height:127px;background:#ffffff;"></div>
<div class="b" style="left:581.5px;top:806px;width:2px;height:127px;background:#e0e0e3;"></div>
<div class="b" style="left:841.5px;top:806px;width:2px;height:127px;background:#e0e0e3;"></div>
<div class="b" style="left:1002px;top:806px;width:2px;height:127px;background:#e0e0e3;"></div>
<div class="b" style="left:1182px;top:806px;width:2px;height:127px;background:#e0e0e3;"></div>
<div class="b" style="left:1342px;top:806px;width:2px;height:127px;background:#e0e0e3;"></div>
<div class="b" style="left:1442px;top:806px;width:2px;height:127px;background:#e0e0e3;"></div>
<div class="b" style="left:1641.5px;top:806px;width:2px;height:127px;background:#e0e0e3;"></div>
<div class="b" style="left:1842px;top:806px;width:2px;height:127px;background:#e0e0e3;"></div>
<div class="b" style="left:2042px;top:806px;width:2px;height:127px;background:#e0e0e3;"></div>
<div class="b" style="left:2242px;top:806px;width:2px;height:127px;background:#e0e0e3;"></div>
<div class="b" style="left:2442px;top:806px;width:2px;height:127px;background:#e0e0e3;"></div>
<div class="b" style="left:2586px;top:806px;width:2px;height:127px;background:#e0e0e3;"></div>
<div class="b" style="left:2575px;top:742px;width:12px;height:196px;background:linear-gradient(to right, rgba(0,0,0,0), rgba(0,0,0,0.05));"></div>
<div class="t " style="left:690px;top:763px;font-size:24px;line-height:24px;color:#333;font-weight:bold;">单位</div>
<div class="t " style="left:887.5px;top:763px;font-size:24px;line-height:24px;color:#333;font-weight:bold;">换算率</div>
<div class="t " style="left:1045.5px;top:763px;font-size:24px;line-height:24px;color:#333;font-weight:bold;">换算单位</div>
<div class="t " style="left:1216.5px;top:763px;font-size:24px;line-height:24px;color:#333;font-weight:bold;">包装条码</div>
<div class="t " style="left:1352.5px;top:763px;font-size:24px;line-height:24px;color:#333;font-weight:bold;">浮动</div>
<svg class="b" style="left:1410px;top:764px;" width="24" height="24" viewBox="0 0 24 24"><circle cx="12.0" cy="12.0" r="10.9" fill="none" stroke="#555" stroke-width="1.7"/><path d="M8.6,9.0 a3.4,3.4 0 1 1 5.0,3.0 c-1.1,0.6 -1.6,1.2 -1.6,2.5" fill="none" stroke="#555" stroke-width="1.7" stroke-linecap="round"/><circle cx="12.0" cy="18.2" r="1.2" fill="#555"/></svg>
<div class="t " style="left:1490.5px;top:763px;font-size:24px;line-height:24px;color:#333;font-weight:bold;">零售价</div>
<svg class="b" style="left:1572px;top:764px;" width="24" height="24" viewBox="0 0 24 24"><circle cx="12.0" cy="12.0" r="10.9" fill="none" stroke="#555" stroke-width="1.7"/><path d="M8.6,9.0 a3.4,3.4 0 1 1 5.0,3.0 c-1.1,0.6 -1.6,1.2 -1.6,2.5" fill="none" stroke="#555" stroke-width="1.7" stroke-linecap="round"/><circle cx="12.0" cy="18.2" r="1.2" fill="#555"/></svg>
<div class="t " style="left:1708px;top:763px;font-size:24px;line-height:24px;color:#333;font-weight:bold;">会员价</div>
<div class="t " style="left:1867.5px;top:763px;font-size:24px;line-height:24px;color:#333;font-weight:bold;">普通会员价</div>
<svg class="b" style="left:1996px;top:764px;" width="24" height="24" viewBox="0 0 24 24"><circle cx="12.0" cy="12.0" r="10.9" fill="none" stroke="#555" stroke-width="1.7"/><path d="M8.6,9.0 a3.4,3.4 0 1 1 5.0,3.0 c-1.1,0.6 -1.6,1.2 -1.6,2.5" fill="none" stroke="#555" stroke-width="1.7" stroke-linecap="round"/><circle cx="12.0" cy="18.2" r="1.2" fill="#555"/></svg>
<div class="t " style="left:2067px;top:763px;font-size:24px;line-height:24px;color:#333;font-weight:bold;">基准批发价</div>
<svg class="b" style="left:2196px;top:764px;" width="24" height="24" viewBox="0 0 24 24"><circle cx="12.0" cy="12.0" r="10.9" fill="none" stroke="#555" stroke-width="1.7"/><path d="M8.6,9.0 a3.4,3.4 0 1 1 5.0,3.0 c-1.1,0.6 -1.6,1.2 -1.6,2.5" fill="none" stroke="#555" stroke-width="1.7" stroke-linecap="round"/><circle cx="12.0" cy="18.2" r="1.2" fill="#555"/></svg>
<div class="t " style="left:2279px;top:763px;font-size:24px;line-height:24px;color:#333;font-weight:bold;">基准进价</div>
<svg class="b" style="left:2384px;top:764px;" width="24" height="24" viewBox="0 0 24 24"><circle cx="12.0" cy="12.0" r="10.9" fill="none" stroke="#555" stroke-width="1.7"/><path d="M8.6,9.0 a3.4,3.4 0 1 1 5.0,3.0 c-1.1,0.6 -1.6,1.2 -1.6,2.5" fill="none" stroke="#555" stroke-width="1.7" stroke-linecap="round"/><circle cx="12.0" cy="18.2" r="1.2" fill="#555"/></svg>
<div class="t " style="left:2474px;top:763px;font-size:24px;line-height:24px;color:#333;font-weight:bold;">价格等级1</div>
<div class="t " style="left:2635px;top:763px;font-size:24px;line-height:24px;color:#333;font-weight:bold;">操作</div>
<div class="t " style="left:449.5px;top:829px;font-size:24px;line-height:24px;color:#333;">主计量</div>
<div class="t " style="left:449.5px;top:893px;font-size:24px;line-height:24px;color:#333;">辅计量</div>
<div class="t " style="left:611px;top:828px;font-size:24px;line-height:24px;color:#222;">斤</div>
<div class="t " style="left:611px;top:892px;font-size:24px;line-height:24px;color:#222;">支(1支≈10斤)</div>
<div class="t " style="left:870px;top:890px;font-size:24px;line-height:24px;color:#222;">10</div>
<div class="t " style="left:1031px;top:893px;font-size:24px;line-height:24px;color:#a0a0a0;">斤</div>
<svg class="b" style="left:1120px;top:892px;" width="28" height="17" viewBox="0 0 28 17"><polyline points="3.2,3.2 14.0,14.04 24.8,3.2" fill="none" stroke="#b0b0b0" stroke-width="2" stroke-linecap="round" stroke-linejoin="round"/></svg>
<svg class="b" style="left:1380px;top:820px;" width="28" height="28" viewBox="0 0 28 28"><rect x="1" y="1" width="26" height="26" rx="5" fill="#e9ebf3" stroke="#b9bbc2" stroke-width="2"/></svg>
<svg class="b" style="left:1380px;top:884px;" width="28" height="28" viewBox="0 0 28 28"><rect x="0" y="0" width="28" height="28" rx="5" fill="#5361f0"/><polyline points="6.72,14.0 12.04,19.040000000000003 21.560000000000002,9.520000000000001" fill="none" stroke="#fff" stroke-width="3.2" stroke-linecap="round" stroke-linejoin="round"/></svg>
<svg class="b" style="left:2613px;top:887px;" width="34" height="34" viewBox="0 0 34 34"><circle cx="17" cy="17" r="15" fill="#fff" stroke="#8a8a8a" stroke-width="2"/><path d="M17,8.5 V25.5 M8.5,17 H25.5" stroke="#222" stroke-width="2.2" stroke-linecap="round"/></svg>
<div class="b" style="left:602px;top:743px;width:211px;height:70px;box-sizing:border-box;border:5px solid #e64328;border-radius:0px;background:transparent;"></div>
<div class="b" style="left:1329px;top:742px;width:136px;height:64px;box-sizing:border-box;border:5px solid #e64328;border-radius:0px;background:transparent;"></div>
<div class="b" style="left:384px;top:802px;width:195px;height:145px;box-sizing:border-box;border:5px solid #e64328;border-radius:0px;background:transparent;"></div>
<div class="t " style="left:387px;top:1004.5px;font-size:24px;line-height:24px;color:#333;letter-spacing:2px;">采购单位</div>
<div class="t " style="left:511px;top:1003px;font-size:24px;line-height:24px;color:#111;">斤</div>
<div class="b" style="left:510px;top:1046px;width:226px;height:2px;background:#c2c2c2;"></div>
<svg class="b" style="left:698.5px;top:1002.5px;" width="27.5" height="17.5" viewBox="0 0 27.5 17.5"><polyline points="3.3200000000000003,3.3200000000000003 13.75,14.443999999999999 24.18,3.3200000000000003" fill="none" stroke="#4e5ef5" stroke-width="2.2" stroke-linecap="round" stroke-linejoin="round"/></svg>
<div class="t " style="left:788px;top:1004.5px;font-size:24px;line-height:24px;color:#333;letter-spacing:2px;">销售单位</div>
<div class="t " style="left:912px;top:1003px;font-size:24px;line-height:24px;color:#111;">斤</div>
<div class="b" style="left:912px;top:1046px;width:226px;height:2px;background:#c2c2c2;"></div>
<svg class="b" style="left:1100px;top:1002.5px;" width="27.5" height="17.5" viewBox="0 0 27.5 17.5"><polyline points="3.3200000000000003,3.3200000000000003 13.75,14.443999999999999 24.18,3.3200000000000003" fill="none" stroke="#4e5ef5" stroke-width="2.2" stroke-linecap="round" stroke-linejoin="round"/></svg>
<div class="t " style="left:1189.5px;top:1004.5px;font-size:24px;line-height:24px;color:#333;letter-spacing:2px;">零售单位</div>
<div class="t " style="left:1313.5px;top:1003px;font-size:24px;line-height:24px;color:#111;">斤</div>
<div class="b" style="left:1313px;top:1046px;width:226px;height:2px;background:#c2c2c2;"></div>
<svg class="b" style="left:1501px;top:1002.5px;" width="27.5" height="17.5" viewBox="0 0 27.5 17.5"><polyline points="3.3200000000000003,3.3200000000000003 13.75,14.443999999999999 24.18,3.3200000000000003" fill="none" stroke="#4e5ef5" stroke-width="2.2" stroke-linecap="round" stroke-linejoin="round"/></svg>
<div class="t " style="left:1590.7px;top:1004.5px;font-size:24px;line-height:24px;color:#333;letter-spacing:2px;">库存单位</div>
<div class="t " style="left:1715px;top:1003px;font-size:24px;line-height:24px;color:#111;">斤</div>
<div class="b" style="left:1715px;top:1046px;width:226px;height:2px;background:#c2c2c2;"></div>
<svg class="b" style="left:1903px;top:1002.5px;" width="27.5" height="17.5" viewBox="0 0 27.5 17.5"><polyline points="3.3200000000000003,3.3200000000000003 13.75,14.443999999999999 24.18,3.3200000000000003" fill="none" stroke="#4e5ef5" stroke-width="2.2" stroke-linecap="round" stroke-linejoin="round"/></svg>
<div class="t " style="left:1993px;top:1004.5px;font-size:24px;line-height:24px;color:#333;letter-spacing:2px;">生产单位</div>
<div class="t " style="left:2117.5px;top:1003px;font-size:24px;line-height:24px;color:#111;">斤</div>
<div class="b" style="left:2117px;top:1046px;width:226px;height:2px;background:#c2c2c2;"></div>
<svg class="b" style="left:2304px;top:1002.5px;" width="27.5" height="17.5" viewBox="0 0 27.5 17.5"><polyline points="3.3200000000000003,3.3200000000000003 13.75,14.443999999999999 24.18,3.3200000000000003" fill="none" stroke="#4e5ef5" stroke-width="2.2" stroke-linecap="round" stroke-linejoin="round"/></svg>
<div class="t " style="left:2368.6px;top:1004.5px;font-size:24px;line-height:24px;color:#333;letter-spacing:2px;">报表辅单位</div>
<div class="t " style="left:2518.5px;top:1003px;font-size:24px;line-height:24px;color:#111;">支</div>
<div class="b" style="left:2518px;top:1046px;width:185.5px;height:2px;background:#c2c2c2;"></div>
<svg class="b" style="left:2666px;top:1002.5px;" width="28" height="17.5" viewBox="0 0 28 17.5"><polyline points="3.3200000000000003,3.3200000000000003 14.0,14.443999999999999 24.68,3.3200000000000003" fill="none" stroke="#4e5ef5" stroke-width="2.2" stroke-linecap="round" stroke-linejoin="round"/></svg>
<svg class="b" style="left:2720px;top:1004px;" width="24" height="24" viewBox="0 0 24 24"><circle cx="12.0" cy="12.0" r="10.9" fill="none" stroke="#555" stroke-width="1.7"/><path d="M8.6,9.0 a3.4,3.4 0 1 1 5.0,3.0 c-1.1,0.6 -1.6,1.2 -1.6,2.5" fill="none" stroke="#555" stroke-width="1.7" stroke-linecap="round"/><circle cx="12.0" cy="18.2" r="1.2" fill="#555"/></svg>
<svg class="b" style="left:332px;top:1132px;" width="28" height="28" viewBox="0 0 28 28"><rect width="28" height="28" rx="3" fill="#5db795"/><circle cx="14" cy="14" r="8.5" fill="#fff"/><path d="M11.5,9.8 L18.5,14 L11.5,18.2Z" fill="#5db795"/></svg>
<div class="t " style="left:377.5px;top:1135.5px;font-size:28px;line-height:28px;color:#333;font-weight:bold;">主图视频</div>
<div class="t " style="left:521px;top:1138px;font-size:24px;line-height:24px;color:#555;letter-spacing:0.19px;-webkit-text-stroke:0.45px #555;">支持最多上传1个视频(建议时长30秒以内最多不高于60秒，宽高比16:9或者1:1，大小不超过30M，格式支持wmv、avi、mpg、mpeg、3gp、mov、mp4、flv、f4v、m4v、m2t、mts、rmvb、vob、</div>
<div class="t " style="left:521px;top:1161px;font-size:24px;line-height:24px;color:#555;-webkit-text-stroke:0.45px #555;">mkv)</div>
<div class="b" style="left:379px;top:1192px;width:198px;height:138px;box-sizing:border-box;border:2px solid #d6d6d6;border-radius:5px;background:#fff;"></div>
<div class="b" style="left:472px;top:1254px;width:8px;height:60px;background:#d6d6d6;border-radius:4px;"></div>
<div class="b" style="left:440px;top:1286px;width:72px;height:8px;background:#d6d6d6;border-radius:4px;"></div>
<div class="b" style="left:2839px;top:268px;width:79px;height:79px;border-radius:50%;box-shadow:0 0 10px rgba(0,0,0,0.12);"></div>
<svg class="b" style="left:2830px;top:258px;" width="38" height="100" viewBox="0 0 38 100"><circle cx="48.5" cy="49.5" r="38" fill="#e6ecf8" stroke="#ffffff" stroke-width="3"/><ellipse cx="56" cy="50" rx="24" ry="21" fill="#f3f5fc"/><ellipse cx="19.5" cy="41" rx="2.6" ry="7" fill="#3b52d6"/><rect x="25" y="37" width="32" height="27" rx="9" fill="#0f1a6c" stroke="#3a4cd0" stroke-width="1.5"/><rect x="33" y="45" width="9" height="12" rx="3" fill="#62cdf7"/><ellipse cx="32" cy="79" rx="10" ry="5" fill="#d5dbf3"/></svg>
<div class="b" style="left:230px;top:1302px;width:2638px;height:96px;background:linear-gradient(to bottom, #ffffff 0%, #ffffff 45%, #f3f3f4 100%);box-shadow:0 -3px 6px rgba(0,0,0,0.08);"></div>
<div class="t " style="left:266.6px;top:1320.4px;font-size:24px;line-height:24px;color:#666;">建档人：<span style="letter-spacing:-0.85px">15192791531</span></div>
<div class="t " style="left:266.6px;top:1356px;font-size:24px;line-height:24px;color:#666;">修改人：<span style="letter-spacing:2px">––</span></div>
<div class="t " style="left:627px;top:1320.4px;font-size:24px;line-height:24px;color:#666;">建档日期：2024–12–18</div>
<div class="t " style="left:627px;top:1356px;font-size:24px;line-height:24px;color:#666;">修改日期：2024–12–19</div>
<svg class="b" style="left:890px;top:1318px;" width="26" height="28" viewBox="0 0 26 28"><path d="M11.5,4.5 H6 a3,3 0 0 0 -3,3 V21.5 a3,3 0 0 0 3,3 H18 a3,3 0 0 0 3,-3 V14.2" fill="none" stroke="#222" stroke-width="2" stroke-linecap="round"/><path d="M7.5,17.5 L14.5,7 L19,9.5 L12,20 L8.5,22.5 Z" fill="none" stroke="#222" stroke-width="1.9" stroke-linejoin="round"/><path d="M16.2,5 L17.8,2.5 L22,5 L20.5,7.5" fill="none" stroke="#222" stroke-width="1.9" stroke-linejoin="round"/></svg>
<div class="b" style="left:2248px;top:1322px;width:174px;height:71px;box-sizing:border-box;border:2px solid #8c8c8c;border-radius:6px;background:#fff;"></div>
<div class="b" style="left:2374px;top:1323px;width:2px;height:69px;background:#8c8c8c;"></div>
<div class="t " style="left:2281px;top:1344px;font-size:30px;line-height:30px;color:#333;">打印</div>
<svg class="b" style="left:2382px;top:1348px;" width="32" height="19" viewBox="0 0 32 19"><polyline points="3.56,3.56 16.0,15.751999999999999 28.44,3.56" fill="none" stroke="#333" stroke-width="2.6" stroke-linecap="round" stroke-linejoin="round"/></svg>
<div class="b" style="left:2448px;top:1314px;width:164px;height:72px;box-sizing:border-box;border:2px solid #8c8c8c;border-radius:6px;background:#fff;"></div>
<div class="t " style="left:2499px;top:1337px;font-size:30px;line-height:30px;color:#333;">取消</div>
<div class="b" style="left:2636px;top:1314px;width:164px;height:72px;background:#5361f0;border-radius:6px;"></div>
<div class="t " style="left:2687px;top:1335px;font-size:30px;line-height:30px;color:#fff;-webkit-text-stroke:0.4px #fff;">保存</div>
</body></html>
